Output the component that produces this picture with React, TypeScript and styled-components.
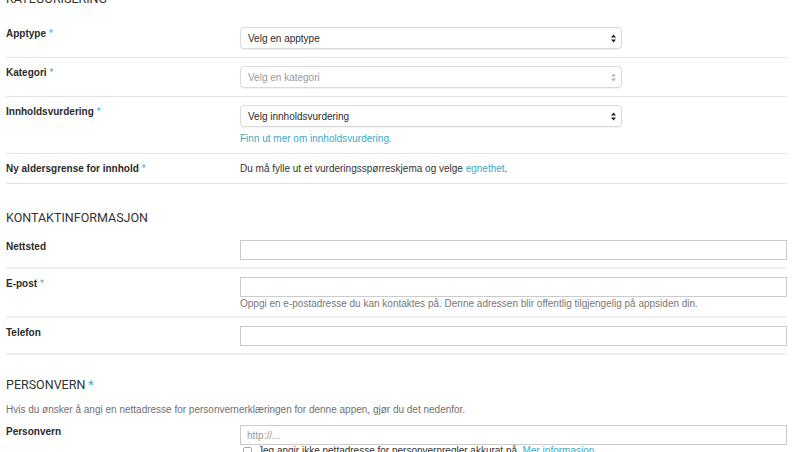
import React from "react";
import styled, { createGlobalStyle } from "styled-components";

const GlobalStyle = createGlobalStyle`
  html, body { margin: 0; padding: 0; background: #fff; }
  body {
    font-family: "Liberation Sans", Arial, Helvetica, sans-serif;
    color: #333;
    overflow: hidden;
  }
  * { box-sizing: border-box; }
`;

const ACCENT = "#3ea8c9";

const Page = styled.div`
  width: 787px;
  padding-left: 6px;
`;

const SectionTitle = styled.h2<{ $mt: number; $mb: number }>`
  margin: ${(p) => p.$mt}px 0 ${(p) => p.$mb}px;
  font-family: Roboto, "Liberation Sans", sans-serif;
  font-weight: 400;
  font-size: 12.5px;
  line-height: 15px;
  color: #333;
  text-transform: uppercase;
`;

const Star = styled.span`
  color: ${ACCENT};
  margin-left: 3px;
  font-weight: 400;
`;

const Row = styled.div<{ $pb: number; $border: number; $borderColor: string }>`
  display: grid;
  grid-template-columns: 234px 1fr;
  padding: 8px 0 ${(p) => p.$pb}px;
  border-bottom: ${(p) => p.$border}px solid ${(p) => p.$borderColor};
`;

const Label = styled.div`
  font-weight: 700;
  font-size: 10px;
  line-height: 14px;
  color: #2b2b2b;
`;

const Field = styled.div`
  display: flex;
  flex-direction: column;
  align-items: flex-start;
`;

const SelectBox = styled.div<{ $disabled?: boolean }>`
  width: 382px;
  height: 22px;
  border: 1px solid #dadada;
  border-radius: 4px;
  box-shadow: 0 1px 1px rgba(0, 0, 0, 0.05);
  background: #fff;
  display: flex;
  align-items: center;
  justify-content: space-between;
  padding: 0 5px 0 7px;
  font-size: 10px;
  color: ${(p) => (p.$disabled ? "#9a9a9a" : "#2b2b2b")};
`;

const TextInput = styled.input`
  width: 547px;
  height: 20px;
  border: 1px solid #cbcbcb;
  border-radius: 0;
  padding: 0 6px;
  font-family: "Liberation Sans", Arial, sans-serif;
  font-size: 10px;
  color: #333;
  background: #fff;
  outline: none;
  &::placeholder { color: #9a9a9a; }
`;

const Link = styled.a`
  color: ${ACCENT};
  text-decoration: none;
`;

const HelpLink = styled(Link)`
  font-size: 10px;
  line-height: 14px;
  margin-top: 5px;
`;

const ValueText = styled.div`
  font-size: 10px;
  line-height: 14px;
  color: #333;
`;

const HelpText = styled.div`
  font-size: 10px;
  line-height: 10px;
  margin-top: 2px;
  color: #777;
`;

const Description = styled.p`
  margin: 0;
  font-size: 10px;
  line-height: 14px;
  color: #707070;
`;

const CheckRow = styled.label`
  display: flex;
  align-items: center;
  gap: 6px;
  margin-top: 0;
  font-size: 10px;
  line-height: 12px;
  color: #333;
`;

const Check = styled.input`
  appearance: none;
  width: 9px;
  height: 9px;
  margin: 0 0 0 3px;
  border: 1px solid #a8a8a8;
  border-radius: 2px;
  background: #fff;
`;

const Arrows = ({ color }: { color: string }) => (
  <svg width="5" height="9" viewBox="0 0 5 9">
    <path d="M0 3.6 L2.5 0.4 L5 3.6 Z" fill={color} />
    <path d="M0 5.4 L2.5 8.6 L5 5.4 Z" fill={color} />
  </svg>
);

const Select = ({ text, disabled }: { text: string; disabled?: boolean }) => (
  <SelectBox $disabled={disabled}>
    <span>{text}</span>
    <Arrows color={disabled ? "#b5b5b5" : "#222"} />
  </SelectBox>
);

const CAT = { $border: 1, $borderColor: "#e4e4e4" };
const CON = { $border: 2, $borderColor: "#efefef" };

export default function App() {
  return (
    <>
      <GlobalStyle />
      <Page>
        <SectionTitle $mt={-9} $mb={13}>Kategorisering</SectionTitle>

        <Row $pb={8} {...CAT}>
          <Label>Apptype<Star>*</Star></Label>
          <Field><Select text="Velg en apptype" /></Field>
        </Row>
        <Row $pb={8} {...CAT}>
          <Label>Kategori<Star>*</Star></Label>
          <Field><Select text="Velg en kategori" disabled /></Field>
        </Row>
        <Row $pb={7} {...CAT}>
          <Label>Innholdsvurdering<Star>*</Star></Label>
          <Field>
            <Select text="Velg innholdsvurdering" />
            <HelpLink href="#">Finn ut mer om innholdsvurdering.</HelpLink>
          </Field>
        </Row>
        <Row $pb={7} {...CAT}>
          <Label>Ny aldersgrense for innhold<Star>*</Star></Label>
          <ValueText>
            Du må fylle ut et vurderingsspørreskjema og velge <Link href="#">egnethet</Link>.
          </ValueText>
        </Row>

        <SectionTitle $mt={26} $mb={7}>Kontaktinformasjon</SectionTitle>

        <Row $pb={7} {...CON}>
          <Label>Nettsted</Label>
          <Field><TextInput /></Field>
        </Row>
        <Row $pb={7} {...CON}>
          <Label>E-post<Star>*</Star></Label>
          <Field>
            <TextInput />
            <HelpText>
              Oppgi en e-postadresse du kan kontaktes på. Denne adressen blir offentlig tilgjengelig på appsiden din.
            </HelpText>
          </Field>
        </Row>
        <Row $pb={7} {...CON}>
          <Label>Telefon</Label>
          <Field><TextInput /></Field>
        </Row>

        <SectionTitle $mt={22} $mb={11}>Personvern<Star>*</Star></SectionTitle>
        <Description>
          Hvis du ønsker å angi en nettadresse for personvernerklæringen for denne appen, gjør du det nedenfor.
        </Description>
        <Row $pb={8} $border={0} $borderColor="transparent">
          <Label>Personvern</Label>
          <Field>
            <TextInput placeholder="http://..." />
            <CheckRow>
              <Check type="checkbox" />
              <span>
                Jeg angir ikke nettadresse for personvernregler akkurat nå. <Link href="#">Mer informasjon</Link>
              </span>
            </CheckRow>
          </Field>
        </Row>
      </Page>
    </>
  );
}
